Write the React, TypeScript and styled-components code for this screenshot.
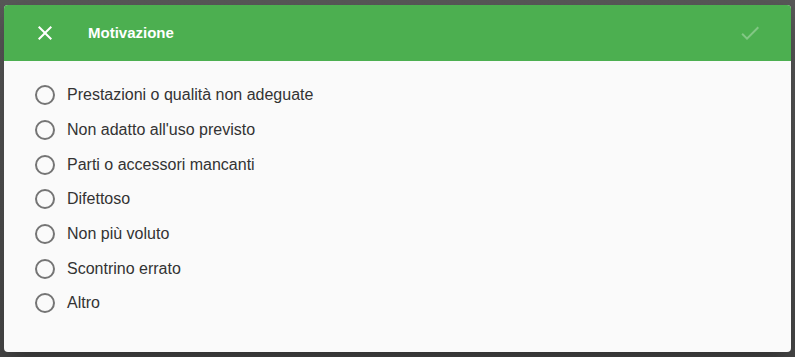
import React, { useState } from 'react';
import styled, { createGlobalStyle } from 'styled-components';

const GlobalStyle = createGlobalStyle`
  html, body {
    margin: 0;
    padding: 0;
    height: 100%;
  }
  body {
    font-family: 'Liberation Sans', Arial, sans-serif;
    background: linear-gradient(#575757, #474747);
  }
`;

const StyledBackdrop = styled.div`
  box-sizing: border-box;
  width: 795px;
  height: 357px;
  padding: 5px 4px 5px 4px;
`;

const StyledDialog = styled.div`
  width: 787px;
  height: 347px;
  background-color: #fafafa;
  border-radius: 4px;
  overflow: hidden;
  display: flex;
  flex-direction: column;
  box-shadow: 0 11px 15px -7px rgba(0, 0, 0, 0.2), 0 24px 38px 3px rgba(0, 0, 0, 0.14);
`;

const StyledHeader = styled.div`
  height: 56px;
  flex-shrink: 0;
  background-color: #4caf50;
  display: flex;
  align-items: center;
  padding: 0 29px;
  color: #ffffff;
`;

const StyledIconButton = styled.button<{ $disabled?: boolean }>`
  width: 24px;
  height: 24px;
  padding: 0;
  border: none;
  background: none;
  display: flex;
  cursor: ${(p) => (p.$disabled ? 'default' : 'pointer')};
  color: ${(p) => (p.$disabled ? 'rgba(255, 255, 255, 0.3)' : '#ffffff')};
  svg {
    fill: currentColor;
  }
`;

const StyledTitle = styled.h2`
  flex: 1;
  margin: 0 0 0 31px;
  font-size: 15px;
  font-weight: bold;
  line-height: 24px;
`;

const StyledList = styled.div`
  padding: 17px 29px 0;
  display: flex;
  flex-direction: column;
`;

const StyledRow = styled.label`
  height: 34.7px;
  display: flex;
  align-items: center;
  gap: 10px;
  cursor: pointer;
  font-size: 16px;
  color: #333333;
`;

const StyledRadio = styled.svg<{ $checked: boolean }>`
  width: 24px;
  height: 24px;
  flex-shrink: 0;
  circle.ring {
    fill: none;
    stroke: ${(p) => (p.$checked ? '#4caf50' : '#757575')};
    stroke-width: 2;
  }
  circle.dot {
    fill: #4caf50;
  }
`;

const reasons = [
  'Prestazioni o qualità non adeguate',
  "Non adatto all'uso previsto",
  'Parti o accessori mancanti',
  'Difettoso',
  'Non più voluto',
  'Scontrino errato',
  'Altro',
];

const CloseIcon = () => (
  <svg viewBox="0 0 24 24" width="24" height="24">
    <path d="M19 6.41L17.59 5 12 10.59 6.41 5 5 6.41 10.59 12 5 17.59 6.41 19 12 13.41 17.59 19 19 17.59 13.41 12z" />
  </svg>
);

const CheckIcon = () => (
  <svg viewBox="0 0 24 24" width="24" height="24">
    <path d="M9 16.17L4.83 12l-1.42 1.41L9 19 21 7l-1.41-1.41z" />
  </svg>
);

export default function App() {
  const [selected, setSelected] = useState<number | null>(null);

  return (
    <>
      <GlobalStyle />
      <StyledBackdrop>
        <StyledDialog>
          <StyledHeader>
            <StyledIconButton aria-label="Chiudi">
              <CloseIcon />
            </StyledIconButton>
            <StyledTitle>Motivazione</StyledTitle>
            <StyledIconButton $disabled={selected === null} aria-label="Conferma">
              <CheckIcon />
            </StyledIconButton>
          </StyledHeader>
          <StyledList>
            {reasons.map((reason, i) => (
              <StyledRow key={reason} onClick={() => setSelected(i)}>
                <StyledRadio viewBox="0 0 24 24" $checked={selected === i}>
                  <circle className="ring" cx="12" cy="12" r="9" />
                  {selected === i ? <circle className="dot" cx="12" cy="12" r="5" /> : null}
                </StyledRadio>
                {reason}
              </StyledRow>
            ))}
          </StyledList>
        </StyledDialog>
      </StyledBackdrop>
    </>
  );
}
